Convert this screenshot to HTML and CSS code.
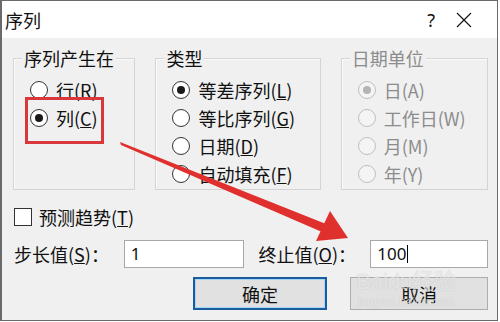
FILE: index.html
```html
<!DOCTYPE html>
<html lang="zh-CN">
<head>
<meta charset="utf-8">
<title>序列</title>
<link rel="stylesheet" href="styles.css">
</head>
<body>
<div class="window">
  <div class="titlebar">
    <span class="title">序列</span>
    <span class="help">?</span>
    <span class="close">
      <svg width="16" height="16" viewBox="0 0 16 16"><path d="M1 1 L15 15 M15 1 L1 15" stroke="#111" stroke-width="1.2" fill="none"/></svg>
    </span>
  </div>
  <div class="content">
    <div class="groups">
      <div class="group g1">
        <span class="group-title">序列产生在</span>
        <div class="opt"><span class="radio"></span><span>行(R)</span></div>
        <div class="opt"><span class="radio on"></span><span>列(<u>C</u>)</span></div>
      </div>
      <div class="group g2">
        <span class="group-title">类型</span>
        <div class="opt"><span class="radio on"></span><span>等差序列(<u>L</u>)</span></div>
        <div class="opt"><span class="radio"></span><span>等比序列(<u>G</u>)</span></div>
        <div class="opt"><span class="radio"></span><span>日期(<u>D</u>)</span></div>
        <div class="opt"><span class="radio"></span><span>自动填充(<u>F</u>)</span></div>
      </div>
      <div class="group g3 disabled">
        <span class="group-title">日期单位</span>
        <div class="opt"><span class="radio on"></span><span>日(A)</span></div>
        <div class="opt"><span class="radio"></span><span>工作日(W)</span></div>
        <div class="opt"><span class="radio"></span><span>月(M)</span></div>
        <div class="opt"><span class="radio"></span><span>年(Y)</span></div>
      </div>
    </div>
    <div class="check-row">
      <span class="checkbox"></span><span>预测趋势(<u>T</u>)</span>
    </div>
    <div class="field-row">
      <span class="lbl lbl1">步长值(<u>S</u>)：</span>
      <span class="input in1">1</span>
      <span class="lbl lbl2">终止值(<u>O</u>)：</span>
      <span class="input in2">100<span class="caret"></span></span>
    </div>
    <div class="btn-row">
      <span class="btn ok">确定</span>
      <span class="btn cancel">取消</span>
    </div>
  </div>

  <div class="highlight"></div>
  <svg class="arrow" width="500" height="322" viewBox="0 0 500 322">
    <polygon points="120,142 121,145 322,232 326,224" fill="#e0302e"/>
    <polygon points="348,238 316,241 330,211" fill="#e0302e"/>
  </svg>
  <div class="watermark">
    <span class="wm-main">Baidu经验</span>
    <span class="wm-sub">jingyan.baidu.com</span>
  </div>
</div>
</body>
</html>
```

FILE: styles.css
```css
* { box-sizing: border-box; }
html, body { margin: 0; padding: 0; background: #fff; }
body {
  width: 500px;
  height: 322px;
  font-family: "Noto Sans CJK SC", "Noto Sans", sans-serif;
  font-size: 18px;
  color: #111;
}
.window {
  position: relative;
  width: 498px;
  height: 321px;
  border: 1px solid #6a6a6a;
  border-left-width: 2px;
  background: #f0f0f0;
  display: flex;
  flex-direction: column;
}
.titlebar {
  height: 37px;
  background: #fff;
  display: flex;
  align-items: center;
  padding-left: 3px;
  flex: none;
}
.title { font-size: 18px; line-height: 20px; }
.help {
  margin-left: auto;
  font-family: "Noto Sans", sans-serif;
  font-size: 18px;
  line-height: 20px;
  margin-right: 21px;
}
.close {
  display: flex;
  width: 16px;
  height: 16px;
  margin-right: 25px;
}
.content {
  flex: 1;
  padding: 20px 9px 0 11px;
  display: flex;
  flex-direction: column;
}
.groups {
  display: flex;
  gap: 20px;
}
.group {
  position: relative;
  border: 1px solid #d4d4d4;
  box-shadow: inset 1px 1px 0 #fbfbfb;
  padding: 17px 0 1px 16px;
  display: flex;
  flex-direction: column;
}
.g1 { width: 123px; }
.g2 { width: 166px; }
.g3 { width: 148px; }
.group-title {
  position: absolute;
  top: -11px;
  left: 8px;
  padding: 0 2px;
  background: #f0f0f0;
  line-height: 20px;
}
.opt {
  height: 28px;
  display: flex;
  align-items: center;
  gap: 8px;
  white-space: nowrap;
  line-height: 20px;
}
.radio {
  width: 18px;
  height: 18px;
  border: 1px solid #333;
  border-radius: 50%;
  background: #fff;
  display: flex;
  align-items: center;
  justify-content: center;
  flex: none;
}
.radio.on::after {
  content: "";
  width: 8px;
  height: 8px;
  border-radius: 50%;
  background: #1a1a1a;
}
.disabled { color: #8c8c8c; }
.disabled .group-title { color: #8c8c8c; }
.disabled .radio { border-color: #c0c0c0; background: #f4f4f4; }
.disabled .radio.on::after { background: #b4b4b4; }
.check-row {
  margin-top: 13px;
  height: 28px;
  display: flex;
  align-items: center;
  gap: 7px;
  padding-left: 1px;
  line-height: 20px;
}
.checkbox {
  width: 18px;
  height: 18px;
  border: 1px solid #333;
  background: #fff;
  flex: none;
}
.field-row {
  margin-top: 9px;
  height: 28px;
  display: flex;
  align-items: center;
  line-height: 20px;
}
.lbl { white-space: nowrap; }
.lbl1 { width: 111px; padding-left: 1px; }
.lbl2 { width: 112px; margin-left: 15px; }
.input {
  height: 28px;
  border: 1px solid #a8a8a8;
  background: #fff;
  display: flex;
  align-items: center;
  padding-left: 6px;
  font-family: "Noto Sans", sans-serif;
  font-size: 17px;
}
.in1 { width: 120px; }
.in2 { width: 118px; }
.caret {
  display: inline-block;
  width: 1px;
  height: 18px;
  background: #000;
  margin-left: 1px;
}
.btn-row {
  margin-top: 9px;
  display: flex;
  justify-content: flex-end;
  gap: 23px;
}
.btn {
  height: 33px;
  display: flex;
  align-items: center;
  justify-content: center;
  background: #e1e1e1;
  border: 1px solid #adadad;
  line-height: 20px;
}
.ok {
  width: 134px;
  border: 2px solid #1b5d9c;
  box-shadow: inset 0 0 0 1px #a6d6f4;
}
.cancel { width: 138px; }
.highlight {
  position: absolute;
  left: 23px;
  top: 96px;
  width: 79px;
  height: 47px;
  border: 3px solid #d8383c;
}
.arrow {
  position: absolute;
  left: -2px;
  top: -1px;
  pointer-events: none;
}
.watermark {
  position: absolute;
  left: 354px;
  top: 268px;
  display: flex;
  flex-direction: column;
  align-items: center;
  color: rgba(255, 255, 255, 0.6);
  text-shadow: 0 0 1px rgba(110, 110, 110, 0.35);
  pointer-events: none;
}
.wm-main {
  font-family: "Liberation Sans", sans-serif;
  font-size: 22px;
  line-height: 26px;
}
.wm-sub {
  font-family: "Liberation Sans", sans-serif;
  font-size: 12px;
  line-height: 14px;
  margin-top: 0;
}
```
